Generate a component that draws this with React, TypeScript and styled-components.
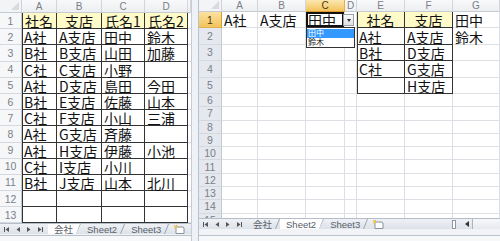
import React from 'react'
import styled, { createGlobalStyle } from 'styled-components'

const GlobalStyle = createGlobalStyle`
  html, body { margin:0; padding:0; background:#fff; }
  body {
    width:500px;
    height:241px;
    overflow:hidden;
    font-family:"Noto Sans CJK JP", "Liberation Sans", sans-serif;
  }
  * { box-sizing:border-box; }
`

type CellDef = {
  t?: string
  fill?: boolean
  center?: boolean
  box?: boolean
  boxLeft?: boolean
  sel?: boolean
}

type SheetDef = {
  cols: number[]
  letters: string[]
  rows: number[]
  headerH: number
  cells: CellDef[][]
  activeCol?: number
  activeRow?: number
  rowHeaderBg: string
}

// ---- data ----

const leftData: string[][] = [
  ['社名', '支店', '氏名1', '氏名2'],
  ['A社', 'A支店', '田中', '鈴木'],
  ['B社', 'B支店', '山田', '加藤'],
  ['C社', 'C支店', '小野', ''],
  ['A社', 'D支店', '島田', '今田'],
  ['B社', 'E支店', '佐藤', '山本'],
  ['C社', 'F支店', '小山', '三浦'],
  ['A社', 'G支店', '斉藤', ''],
  ['A社', 'H支店', '伊藤', '小池'],
  ['C社', 'I支店', '小川', ''],
  ['B社', 'J支店', '山本', '北川'],
  ['', '', '', ''],
  ['', '', '', ''],
]

const leftSheet: SheetDef = {
  cols: [22, 35, 45, 43, 43, 3],
  letters: ['A', 'B', 'C', 'D', ''],
  headerH: 13,
  rows: Array(13).fill(16.2),
  rowHeaderBg: '#f6f7f9',
  cells: leftData.map((r, ri) =>
    [
      ...r.map((t, ci) => ({
        t,
        fill: ri === 0,
        center: ri === 0,
        box: true,
        boxLeft: ci === 0,
      })),
      {},
    ]
  ),
}

const rightData: string[][] = [
  ['A社', 'A支店', '田中', '', '社名', '支店', '田中'],
  ['', '', '', '', 'A社', 'A支店', '鈴木'],
  ['', '', '', '', 'B社', 'D支店', ''],
  ['', '', '', '', 'C社', 'G支店', ''],
  ['', '', '', '', '', 'H支店', ''],
]

const rightSheet: SheetDef = {
  cols: [23, 36, 48, 39, 12, 48, 48, 47],
  letters: ['A', 'B', 'C', 'D', 'E', 'F', 'G'],
  headerH: 12,
  rows: [...Array(5).fill(16.4), ...Array(10).fill(13.3)],
  rowHeaderBg: '#e5e9ef',
  activeCol: 2,
  activeRow: 0,
  cells: Array.from({ length: 15 }, (_, ri) => {
    const r = rightData[ri] || ['', '', '', '', '', '', '']
    return r.map((t, ci) => ({
      t,
      fill: ri === 0 && (ci === 4 || ci === 5),
      center: ri === 0 && (ci === 4 || ci === 5),
      box: ri < 5 && (ci === 4 || ci === 5),
      boxLeft: ri < 5 && ci === 4,
      sel: ri === 0 && ci === 2,
    }))
  }),
}

// ---- styled parts ----

const Page = styled.div`
  display:flex;
  width:500px;
  height:241px;
  background:#fff;
`

const Window = styled.div<{ $w?: number; $gridH: number }>`
  display:grid;
  grid-template-rows:${p => p.$gridH}px auto 1fr;
  grid-template-columns:100%;
  width:${p => (p.$w ? p.$w + 'px' : 'auto')};
  flex:${p => (p.$w ? '0 0 auto' : '1')};
  height:241px;
  overflow:hidden;
`

const Divider = styled.div`
  width:8px;
  background:#eef1f5;
  border-left:1px solid #c4ccd6;
  border-right:1px solid #b8c2ce;
`

const GridArea = styled.div`
  overflow:hidden;
  position:relative;
`

const Grid = styled.div<{ $cols: string; $rows: string }>`
  display:grid;
  grid-template-columns:${p => p.$cols};
  grid-template-rows:${p => p.$rows};
`

const Corner = styled.div`
  position:relative;
  background:#f3f4f6;
  border-right:1px solid #cfd3d8;
  border-bottom:1px solid #c6cbd1;
  &::after {
    content:'';
    position:absolute;
    right:2px;
    bottom:2px;
    border-left:8px solid transparent;
    border-bottom:8px solid #d7dadf;
  }
`

const ColHead = styled.div<{ $active?: boolean }>`
  display:flex;
  align-items:center;
  justify-content:center;
  font-family:"Liberation Sans", sans-serif;
  font-size:10px;
  color:${p => (p.$active ? '#4a3a10' : '#7a7f86')};
  background:${p =>
    p.$active ? 'linear-gradient(#fbe7b0, #f3c35c)' : 'linear-gradient(#f8f9fa, #eceef1)'};
  border-right:1px solid ${p => (p.$active ? '#e0b050' : '#d2d6db')};
  border-bottom:1px solid ${p => (p.$active ? '#d89b2c' : '#c6cbd1')};
  overflow:hidden;
`

const RowHead = styled.div<{ $active?: boolean; $bg: string }>`
  display:flex;
  align-items:center;
  justify-content:center;
  font-family:"Liberation Sans", sans-serif;
  font-size:10.5px;
  color:${p => (p.$active ? '#4a3a10' : '#7a7f86')};
  background:${p => (p.$active ? 'linear-gradient(#fbe2a2, #f3c35c)' : p.$bg)};
  border-right:1px solid ${p => (p.$active ? '#d89b2c' : '#c3c9d0')};
  border-bottom:1px solid ${p => (p.$active ? '#e0b050' : '#d5d9de')};
  overflow:hidden;
`

const Cell = styled.div<{
  $fill?: boolean
  $center?: boolean
  $box?: boolean
  $boxLeft?: boolean
  $sel?: boolean
}>`
  position:relative;
  display:flex;
  align-items:center;
  justify-content:${p => (p.$center ? 'center' : 'flex-start')};
  padding:1px 2px 0;
  font-size:14px;
  line-height:1;
  color:#111;
  white-space:nowrap;
  background:${p => (p.$fill ? '#fffbc9' : '#fff')};
  border-right:1px solid ${p => (p.$box ? '#333' : '#dcdfe3')};
  border-bottom:1px solid ${p => (p.$box ? '#333' : '#dcdfe3')};
  box-shadow:${p =>
    p.$sel ? 'inset 0 0 0 2px #111' : p.$boxLeft ? 'inset 1px 0 0 #333' : 'none'};
  z-index:${p => (p.$sel ? 2 : 'auto')};
`

const DropButton = styled.div`
  position:absolute;
  left:calc(100% - 1px);
  top:2px;
  width:11px;
  height:12px;
  background:linear-gradient(#fafafa, #dfe2e6);
  border:1px solid #9aa1a9;
  display:flex;
  align-items:center;
  justify-content:center;
  &::after {
    content:'';
    border-left:2.5px solid transparent;
    border-right:2.5px solid transparent;
    border-top:3px solid #333;
  }
`

const DropList = styled.div`
  position:absolute;
  left:0;
  top:100%;
  width:49px;
  border:1px solid #333;
  background:#fff;
  padding:1px 0;
  z-index:3;
`

const DropItem = styled.div<{ $hi?: boolean }>`
  height:8.5px;
  padding-left:1px;
  font-size:8px;
  line-height:8.5px;
  color:${p => (p.$hi ? '#fff' : '#222')};
  background:${p => (p.$hi ? '#3399ff' : 'transparent')};
`

const TabBar = styled.div<{ $h: number }>`
  display:flex;
  align-items:stretch;
  height:${p => p.$h}px;
  overflow:hidden;
  background:linear-gradient(#eef1f5, #dde2e9);
  border-top:1px solid #b4bdc8;
  font-family:"Liberation Sans", "Noto Sans CJK JP", sans-serif;
`

const NavGroup = styled.div`
  display:flex;
  flex-shrink:0;
  align-items:center;
  gap:7px;
  padding:0 5px 0 4px;
`

const Tab = styled.div<{ $active?: boolean }>`
  position:relative;
  flex-shrink:0;
  display:flex;
  align-items:center;
  padding:0 8px 0 6px;
  font-size:9.5px;
  white-space:nowrap;
  color:#5a6068;
  background:${p => (p.$active ? '#fff' : 'transparent')};
  clip-path:${p =>
    p.$active ? 'polygon(0 0, 100% 0, calc(100% - 5px) 100%, 0 100%)' : 'none'};
  &::after {
    content:'';
    position:absolute;
    right:2px;
    top:0;
    bottom:0;
    width:1px;
    background:#9aa4b0;
    transform:skewX(-22deg);
  }
`

const TabIcon = styled.div`
  display:flex;
  flex-shrink:0;
  align-items:center;
  padding:0 6px 0 4px;
`

const Spacer = styled.div`
  flex:1;
`

const SplitBox = styled.div`
  align-self:center;
  flex-shrink:0;
  width:4px;
  height:9px;
  margin-right:6px;
  background:#fff;
  border:1px solid #8e98a4;
`

const ScrollArrow = styled.div`
  display:flex;
  flex-shrink:0;
  align-items:center;
  justify-content:center;
  width:10px;
  &::after {
    content:'';
    border-top:3px solid transparent;
    border-bottom:3px solid transparent;
    border-right:4px solid #333;
  }
`

const ScrollTrack = styled.div`
  flex-shrink:0;
  width:28px;
  background:linear-gradient(#f7f8fa, #e6e9ee);
  border-left:1px solid #aab3be;
`

const Footer = styled.div<{ $line: number }>`
  background:linear-gradient(#f1f3f6 ${p => p.$line}px, #b9c2cd ${p => p.$line}px, #b9c2cd ${p => p.$line + 1}px, #f7f8fa ${p => p.$line + 1}px);
`

// ---- small drawings ----

const NavIcons = () => (
  <NavGroup>
    <svg width="5" height="5" viewBox="0 0 5 5">
      <rect x="0" y="0" width="1" height="5" fill="#555" />
      <path d="M5 0 L1.5 2.5 L5 5 Z" fill="#555" />
    </svg>
    <svg width="4" height="5" viewBox="0 0 4 5">
      <path d="M4 0 L0.5 2.5 L4 5 Z" fill="#555" />
    </svg>
    <svg width="4" height="5" viewBox="0 0 4 5">
      <path d="M0 0 L3.5 2.5 L0 5 Z" fill="#555" />
    </svg>
    <svg width="5" height="5" viewBox="0 0 5 5">
      <path d="M0 0 L3.5 2.5 L0 5 Z" fill="#555" />
      <rect x="4" y="0" width="1" height="5" fill="#555" />
    </svg>
  </NavGroup>
)

const InsertSheetIcon = () => (
  <svg width="12" height="9" viewBox="0 0 12 9">
    <path d="M3 2 H10 L11 3 V8.5 H3 Z" fill="#fff" stroke="#6e7a88" strokeWidth="0.8" />
    <path d="M3 2 L1 0.5 M3 2 L1.5 3 M3 2 L3.5 0" stroke="#e8a020" strokeWidth="1" />
    <circle cx="3" cy="2" r="1.2" fill="#f4c430" />
  </svg>
)

// ---- sheet ----

const Sheet = ({ def }: { def: SheetDef }) => {
  const cols = def.cols.map(c => c + 'px').join(' ')
  const rows = [def.headerH, ...def.rows].map(r => r + 'px').join(' ')
  return (
    <GridArea>
      <Grid $cols={cols} $rows={rows}>
        <Corner />
        {def.cols.slice(1).map((_, ci) => (
          <ColHead key={'h' + ci} $active={def.activeCol === ci}>
            {def.letters[ci] || ''}
          </ColHead>
        ))}
        {def.cells.map((row, ri) => (
          <React.Fragment key={ri}>
            <RowHead $active={def.activeRow === ri} $bg={def.rowHeaderBg}>
              {ri + 1}
            </RowHead>
            {row.map((c, ci) => (
              <Cell
                key={ci}
                $fill={c.fill}
                $center={c.center}
                $box={c.box}
                $boxLeft={c.boxLeft}
                $sel={c.sel}
              >
                {c.t}
                {c.sel && (
                  <>
                    <DropButton />
                    <DropList>
                      <DropItem $hi>田中</DropItem>
                      <DropItem>鈴木</DropItem>
                    </DropList>
                  </>
                )}
              </Cell>
            ))}
          </React.Fragment>
        ))}
      </Grid>
    </GridArea>
  )
}

const App = () => {
  return (
    <>
      <GlobalStyle />
      <Page>
        <Window $w={191} $gridH={223}>
          <Sheet def={leftSheet} />
          <TabBar $h={11}>
            <NavIcons />
            <Tab $active>会社</Tab>
            <Tab>Sheet2</Tab>
            <Tab>Sheet3</Tab>
            <TabIcon>
              <InsertSheetIcon />
            </TabIcon>
          </TabBar>
          <Footer $line={1} />
        </Window>
        <Divider />
        <Window $gridH={218}>
          <Sheet def={rightSheet} />
          <TabBar $h={11}>
            <NavIcons />
            <Tab>会社</Tab>
            <Tab $active>Sheet2</Tab>
            <Tab>Sheet3</Tab>
            <TabIcon>
              <InsertSheetIcon />
            </TabIcon>
            <Spacer />
            <SplitBox />
            <ScrollArrow />
            <ScrollTrack />
          </TabBar>
          <Footer $line={6} />
        </Window>
      </Page>
    </>
  )
}

export default App
